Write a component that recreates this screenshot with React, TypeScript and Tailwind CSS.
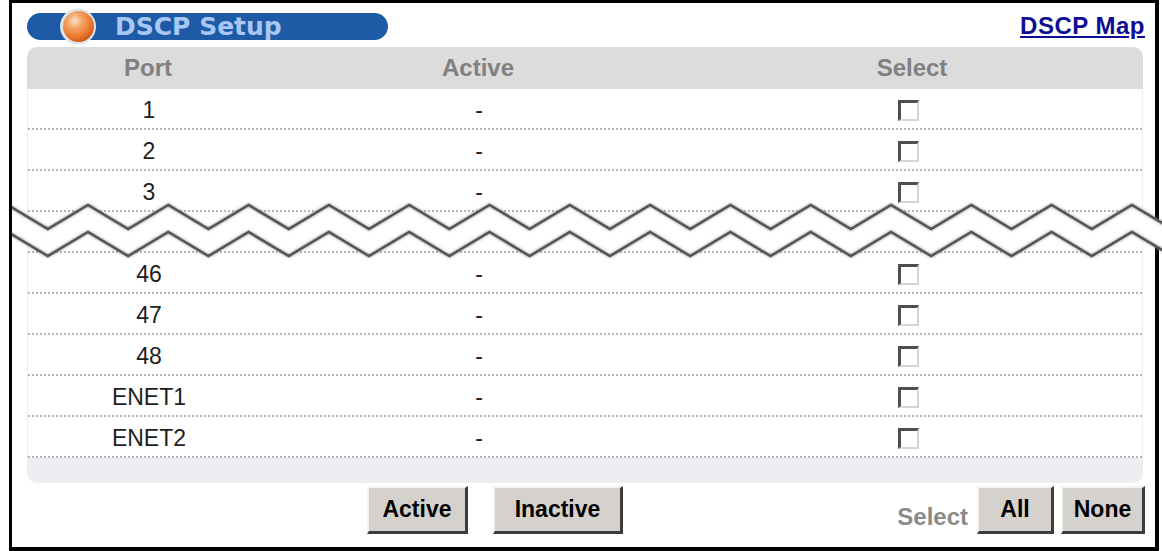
import React from 'react'

const rows: (string | null)[] = ['1', '2', '3', null, '46', '47', '48', 'ENET1', 'ENET2']

// zigzag break drawn over the table, coordinates relative to the svg box
const zig = (offset: number) => {
	const pts: string[] = []
	for (let k = -1; k < 16; k++) {
		pts.push(`${-4.3 + 80.3 * k},${10 + offset}`)
		pts.push(`${35.85 + 80.3 * k},${34 + offset}`)
	}
	return pts
}

const Zigzag = () => {
	const top = zig(0)
	const bottom = zig(27)
	const fill = [...top, ...[...bottom].reverse()].join(' ')
	return (
		<svg className="absolute left-[12px] top-[195px]" width="1150" height="70" viewBox="0 0 1150 70">
			<defs>
				<filter id="soft" x="-5%" y="-50%" width="110%" height="200%">
					<feDropShadow dx="0" dy="0" stdDeviation="1.6" floodColor="#7a7a7a" floodOpacity="0.9" />
				</filter>
			</defs>
			<polygon points={fill} fill="#ffffff" />
			<polyline points={top.join(' ')} fill="none" stroke="#555555" strokeWidth="2.6" filter="url(#soft)" />
			<polyline points={bottom.join(' ')} fill="none" stroke="#555555" strokeWidth="2.6" filter="url(#soft)" />
		</svg>
	)
}

const Ball = () => (
	<svg width="40" height="37" viewBox="0 0 40 37" className="-my-[5px] shrink-0">
		<defs>
			<radialGradient id="orange" cx="38%" cy="32%" r="70%">
				<stop offset="0%" stopColor="#fde2c8" />
				<stop offset="35%" stopColor="#f5a266" />
				<stop offset="75%" stopColor="#e9782e" />
				<stop offset="100%" stopColor="#c95b16" />
			</radialGradient>
		</defs>
		<circle cx="20" cy="18.5" r="18" fill="#dfe3ea" />
		<circle cx="20.5" cy="18.5" r="15.5" fill="url(#orange)" />
	</svg>
)

const Checkbox = () => (
	<div className="w-[21px] h-[21px] bg-white border-t-[3px] border-l-[3px] border-r-2 border-b-2 border-t-[#4e4e4e] border-l-[#4e4e4e] border-r-[#d4d4d4] border-b-[#d4d4d4]" />
)

const Dots = () => (
	<div className="h-[2px] bg-[repeating-linear-gradient(90deg,#b4b4b4_0px,#b4b4b4_2px,transparent_2px,transparent_4px)]" />
)

const Btn = ({ label, w }: { label: string; w: string }) => (
	<button
		className={`${w} h-[48px] bg-[#d5d2cd] border-t-2 border-l-2 border-r-[3px] border-b-[3px] border-t-[#f2f2f2] border-l-[#f2f2f2] border-r-[#3c3c3c] border-b-[#3c3c3c] text-[23px] font-bold text-black leading-none`}
	>
		{label}
	</button>
)

export default function App() {
	return (
		<div className="relative w-[1162px] h-[551px] bg-white pl-[9px] pr-[3px] font-['Liberation_Sans',Arial,sans-serif]">
			<div className="h-full border-black border-t-[3px] border-l-[3px] border-r-[4px] border-b-[4px] pl-[15px] pr-[12px]">
				<div className="h-[44px] flex items-start justify-between pt-[10px]">
					<div className="w-[361px] h-[27px] rounded-full bg-[#1f5aa6] flex items-center pl-[31px]">
						<Ball />
						<span className="ml-[17px] text-[25px] font-bold leading-none text-[#a6c8f2] font-['DejaVu_Sans',sans-serif]">
							DSCP Setup
						</span>
					</div>
					<a href="#" className="-mr-[2px] mt-[1px] text-[24px] font-bold leading-none text-[#0c0c94] underline underline-offset-2 tracking-[0.5px]">
						DSCP Map
					</a>
				</div>

				<div className="w-[1116px]">
					<div className="h-[42px] rounded-t-[10px] bg-[#dcdcdc] grid grid-cols-[242px_418px_440px] items-center text-[24px] font-bold text-[#808080]">
						<div className="text-center">Port</div>
						<div className="text-center">Active</div>
						<div className="text-center pl-[10px]">Select</div>
					</div>
					<div className="bg-[#efedf1] px-px">
						{rows.map((r, i) => (
							<div key={i} className="bg-white">
								<div className="h-[39px] grid grid-cols-[242px_418px_440px] items-center text-[23px] text-[#1e1e1e]">
									{r !== null && (
										<>
											<div className="text-center pt-[3px]">{r}</div>
											<div className="text-center pt-[3px]">-</div>
											<div className="flex justify-center pt-[3px]">
												<Checkbox />
											</div>
										</>
									)}
								</div>
								<Dots />
							</div>
						))}
					</div>
					<div className="h-[25px] rounded-b-[10px] bg-[#efedf1]" />
				</div>

				<div className="mt-[2px] flex items-center">
					<div className="ml-[340px] flex gap-[25px]">
						<Btn label="Active" w="w-[101px]" />
						<Btn label="Inactive" w="w-[130px]" />
					</div>
					<div className="ml-auto -mr-[2px] flex items-center">
						<span className="pt-[14px] text-[24px] font-bold text-[#8a8a8a] mr-[9px]">Select</span>
						<Btn label="All" w="w-[77px]" />
						<div className="w-[7px]" />
						<Btn label="None" w="w-[84px]" />
					</div>
				</div>
			</div>
			<Zigzag />
		</div>
	)
}
